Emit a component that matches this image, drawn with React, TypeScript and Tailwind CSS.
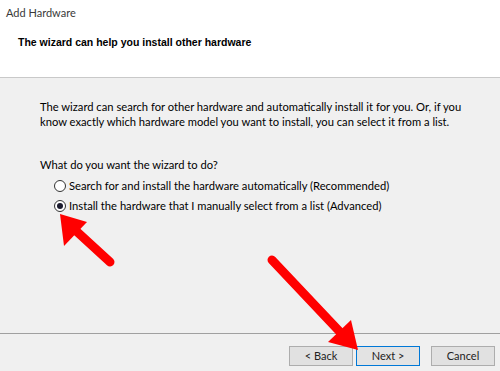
export default function App() {
  return (
    <div className="relative w-[500px] h-[371px] bg-[#f0f0f0] overflow-hidden font-['Lato',sans-serif] text-black">
      {/* Header */}
      <div className="h-[78px] bg-white border-b border-[#c9c9c9]">
        <div className="pl-[6px] pt-[5px] text-[11px] leading-[16px] text-[#3a3a3a]">Add Hardware</div>
        <div className="pl-[18px] pt-[13px] text-[10.5px] leading-[16px] font-bold font-['Liberation_Sans',sans-serif]">
          The wizard can help you install other hardware
        </div>
      </div>

      {/* Body */}
      <div className="h-[256px] border-b border-[#a0a0a0] pl-[40px] pt-[22px] text-[11.2px] leading-[14.5px]">
        <p className="whitespace-nowrap">
          The wizard can search for other hardware and automatically install it for you. Or, if you
          <br />
          know exactly which hardware model you want to install, you can select it from a list.
        </p>
        <p className="mt-[29px]">What do you want the wizard to do?</p>
        <div className="mt-[6px] ml-[14px] flex flex-col gap-[6px]">
          <label className="flex items-center gap-[3px]">
            <span className="w-[12px] h-[12px] rounded-full border border-[#333] bg-white" />
            <span>Search for and install the hardware automatically (Recommended)</span>
          </label>
          <label className="flex items-center gap-[3px]">
            <span className="w-[12px] h-[12px] rounded-full border border-[#333] bg-white flex items-center justify-center">
              <span className="w-[6px] h-[6px] rounded-full bg-[#1b1b2e]" />
            </span>
            <span>Install the hardware that I manually select from a list (Advanced)</span>
          </label>
        </div>
      </div>

      {/* Buttons */}
      <div className="flex justify-end pr-[5px] pt-[12px] text-[11px] text-[#222]">
        <button className="w-[64px] h-[20px] bg-[#e1e1e1] border border-[#adadad]">&lt; Back</button>
        <button className="ml-[3px] w-[64px] h-[20px] bg-[#e3e3e3] border border-[#0078d7]">Next &gt;</button>
        <button className="ml-[11px] w-[64px] h-[20px] bg-[#e1e1e1] border border-[#adadad]">Cancel</button>
      </div>

      {/* Annotation arrows */}
      <svg className="absolute inset-0 pointer-events-none" width="500" height="371" viewBox="0 0 500 371">
        <line x1="110" y1="262" x2="74" y2="229" stroke="#ff0000" strokeWidth="9" strokeLinecap="round" />
        <polygon points="60,214 87,222 64,246" fill="#ff0000" />
        <line x1="272" y1="260" x2="340" y2="332" stroke="#ff0000" strokeWidth="9" strokeLinecap="round" />
        <polygon points="358,350 351,320 328,342" fill="#ff0000" />
      </svg>
    </div>
  );
}
